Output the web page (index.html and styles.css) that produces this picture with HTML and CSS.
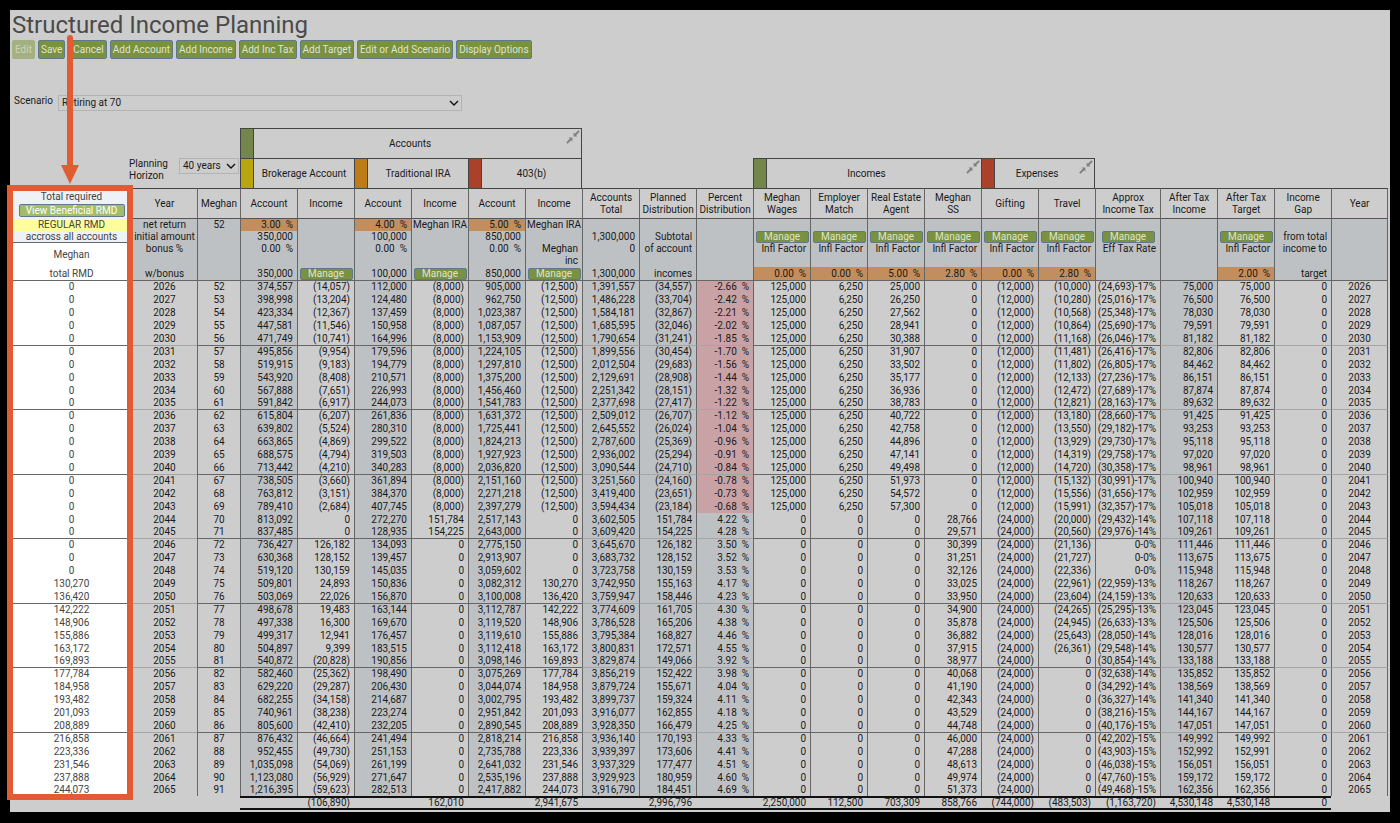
FILE: index.html
```html
<!DOCTYPE html>
<html lang="en">
<head>
  <meta charset="UTF-8">
  <meta name="viewport" content="width=device-width, initial-scale=1.0">
  <title>Structured Income Planning</title>
  <link rel="stylesheet" href="styles.css">
</head>
<body>

  <svg class="defs" width="0" height="0">
    <symbol id="collapse" viewBox="0 0 14 14">
      <path d="M7.6 6.4V2.6l1.2 1.2L12.4.2l1.4 1.4-3.6 3.6 1.2 1.2zM6.4 7.6v3.8l-1.2-1.2-3.6 3.6-1.4-1.4 3.6-3.6-1.2-1.2z"/>
    </symbol>
  </svg>

  <main class="page">
    <h1>Structured Income Planning</h1>

    <div class="toolbar">
      <button disabled>Edit</button>
      <button>Save</button>
      <button class="cancel">Cancel</button>
      <button>Add Account</button>
      <button>Add Income</button>
      <button>Add Inc Tax</button>
      <button>Add Target</button>
      <button>Edit or Add Scenario</button>
      <button>Display Options</button>
    </div>

    <div class="scenario">
      <label for="scenario">Scenario</label>
      <select id="scenario">
        <option>Retiring at 70</option>
      </select>
    </div>

    <div class="plan">
      <table>
        <colgroup>
          <col class="c-rmd">
          <col class="c-tax">
          <col class="c-age">
          <col class="shade"><col>
          <col class="shade"><col>
          <col class="shade"><col>
          <col class="shade"><col class="shade"><col class="shade">
          <col><col><col><col>
          <col><col>
          <col class="c-tax">
          <col class="shade"><col><col><col>
        </colgroup>
        <thead>
          <tr class="group-row">
            <th colspan="3"></th>
            <th colspan="6" class="group last">
              <div><span class="swatch green"></span><span class="name">Accounts</span><svg class="collapse"><use href="#collapse"/></svg></div>
            </th>
            <th colspan="14"></th>
          </tr>
          <tr class="group-row">
            <th></th>
            <th colspan="2">
              <div class="horizon">
                <label for="horizon">Planning Horizon</label>
                <select id="horizon">
                  <option>40 years</option>
                </select>
              </div>
            </th>
            <th colspan="2" class="group"><div><span class="swatch yellow"></span><span class="name">Brokerage Account</span></div></th>
            <th colspan="2" class="group"><div><span class="swatch orange"></span><span class="name">Traditional IRA</span></div></th>
            <th colspan="2" class="group last"><div><span class="swatch red"></span><span class="name">403(b)</span></div></th>
            <th colspan="3"></th>
            <th colspan="4" class="group">
              <div><span class="swatch green"></span><span class="name">Incomes</span><svg class="collapse"><use href="#collapse"/></svg></div>
            </th>
            <th colspan="2" class="group last">
              <div><span class="swatch red"></span><span class="name">Expenses</span><svg class="collapse"><use href="#collapse"/></svg></div>
            </th>
            <th colspan="5"></th>
          </tr>
          <tr class="heads">
            <th class="rmd">Total required<button class="beneficial">View Beneficial RMD</button></th>
            <th>Year</th>
            <th>Meghan</th>
            <th>Account</th>
            <th>Income</th>
            <th>Account</th>
            <th>Income</th>
            <th>Account</th>
            <th>Income</th>
            <th>Accounts Total</th>
            <th>Planned Distribution</th>
            <th>Percent Distribution</th>
            <th>Meghan Wages</th>
            <th>Employer Match</th>
            <th>Real Estate Agent</th>
            <th>Meghan<br>SS</th>
            <th>Gifting</th>
            <th>Travel</th>
            <th>Approx Income Tax</th>
            <th>After Tax Income</th>
            <th>After Tax Target</th>
            <th>Income<br>Gap</th>
            <th>Year</th>
          </tr>
        </thead>
        <tbody class="setup">
          <tr>
            <td class="rmd regular">REGULAR RMD</td>
            <td class="mid">net return</td>
            <td class="mid">52</td>
            <td class="rate">3.00&nbsp; %</td>
            <td></td>
            <td class="rate">4.00&nbsp; %</td>
            <td class="owner">Meghan IRA</td>
            <td class="rate">5.00&nbsp; %</td>
            <td class="owner">Meghan IRA</td>
            <td></td><td></td><td></td>
            <td></td><td></td><td></td><td></td>
            <td></td><td></td><td></td>
            <td></td><td></td><td></td><td></td>
          </tr>
          <tr>
            <td class="rmd across">accross all accounts</td>
            <td class="mid">initial amount</td>
            <td></td>
            <td>350,000</td>
            <td></td>
            <td>100,000</td>
            <td></td>
            <td>850,000</td>
            <td></td>
            <td>1,300,000</td>
            <td>Subtotal</td>
            <td></td>
            <td class="action"><button>Manage</button></td>
            <td class="action"><button>Manage</button></td>
            <td class="action"><button>Manage</button></td>
            <td class="action"><button>Manage</button></td>
            <td class="action"><button>Manage</button></td>
            <td class="action"><button>Manage</button></td>
            <td class="action"><button>Manage</button></td>
            <td></td>
            <td class="action"><button>Manage</button></td>
            <td>from total</td>
            <td></td>
          </tr>
          <tr class="bonus">
            <td class="rmd owner-name">Meghan</td>
            <td class="mid">bonus %</td>
            <td></td>
            <td>0.00&nbsp; %</td>
            <td></td>
            <td>0.00&nbsp; %</td>
            <td></td>
            <td>0.00&nbsp; %</td>
            <td>Meghan<br>inc</td>
            <td>0</td>
            <td>of account</td>
            <td></td>
            <td>Infl Factor</td>
            <td>Infl Factor</td>
            <td>Infl Factor</td>
            <td>Infl Factor</td>
            <td>Infl Factor</td>
            <td>Infl Factor</td>
            <td>Eff Tax Rate</td>
            <td></td>
            <td>Infl Factor</td>
            <td>income to</td>
            <td></td>
          </tr>
          <tr class="with-bonus">
            <td class="rmd">total RMD</td>
            <td class="mid">w/bonus</td>
            <td></td>
            <td>350,000</td>
            <td class="action"><button>Manage</button></td>
            <td>100,000</td>
            <td class="action"><button>Manage</button></td>
            <td>850,000</td>
            <td class="action"><button>Manage</button></td>
            <td>1,300,000</td>
            <td>incomes</td>
            <td></td>
            <td class="rate">0.00&nbsp; %</td>
            <td class="rate">0.00&nbsp; %</td>
            <td class="rate">5.00&nbsp; %</td>
            <td class="rate">2.80&nbsp; %</td>
            <td class="rate">0.00&nbsp; %</td>
            <td class="rate">2.80&nbsp; %</td>
            <td></td>
            <td></td>
            <td class="rate">2.00&nbsp; %</td>
            <td>target</td>
            <td></td>
          </tr>
        </tbody>
        <tbody class="years" id="years"></tbody>
        <tfoot>
          <tr>
            <td class="blank"></td>
            <td class="blank"></td>
            <td class="blank"></td>
            <td></td>
            <td>(106,890)</td>
            <td></td>
            <td>162,010</td>
            <td></td>
            <td>2,941,675</td>
            <td></td>
            <td>2,996,796</td>
            <td></td>
            <td>2,250,000</td>
            <td>112,500</td>
            <td>703,309</td>
            <td>858,766</td>
            <td>(744,000)</td>
            <td>(483,503)</td>
            <td>(1,163,720)</td>
            <td>4,530,148</td>
            <td>4,530,148</td>
            <td>0</td>
            <td class="blank"></td>
          </tr>
        </tfoot>
      </table>
      <div class="frame"></div>
    </div>

    <svg class="arrow" viewBox="0 0 20 150">
      <path d="M7 3a3 3 0 0 1 6 0v127h6L10 149 1 130h6z"/>
    </svg>
  </main>

  <script src="script.js"></script>
</body>
</html>
```
FILE: styles.css
```css
* {
  box-sizing: border-box;
}

body {
  margin: 0;
  padding: 10px;
  background: #000;
  color: #1a1a1a;
  font-family: Roboto, "Liberation Sans", sans-serif;
  font-size: 10px;
  line-height: 12px;
}

.defs {
  position: absolute;
}

.page {
  position: relative;
  padding: 2px;
  background: #cdcdcd;
}

h1 {
  margin: 0 0 2px;
  font-size: 24px;
  line-height: 26px;
  font-weight: 400;
  color: #4a4a4a;
}

button {
  padding: 0;
  border: 1px solid #5d7a8c;
  border-radius: 2px;
  background: #7a9140;
  color: #dfe3d3;
  font: inherit;
  cursor: pointer;
}

.toolbar {
  display: flex;
  gap: 3px;
}

.toolbar button {
  height: 19px;
  padding: 0 2px;
}

.toolbar .cancel {
  padding-left: 4px;
}

.toolbar button:disabled {
  border-color: #a3b182;
  background: #a3b182;
  color: #cdd3be;
}

select {
  appearance: none;
  height: 16px;
  padding: 0 3px;
  border: 1px solid #b3b3b3;
  border-radius: 0;
  background: #cdcdcd url('data:image/svg+xml,<svg xmlns="http://www.w3.org/2000/svg" width="10" height="6"><path d="M1 1l4 4 4-4" fill="none" stroke="%23111" stroke-width="1.4"/></svg>') no-repeat right 2px center;
  color: inherit;
  font: inherit;
}

.scenario {
  display: flex;
  gap: 5px;
  margin: 36px 0 17px;
  padding-left: 2px;
}

.scenario select {
  width: 404px;
}

.plan {
  position: relative;
}

table {
  width: 100%;
  table-layout: fixed;
  border-collapse: separate;
  border-spacing: 0;
}

col {
  width: 57px;
}

.c-rmd {
  width: 120px;
}

.c-tax {
  width: 65px;
}

.c-age {
  width: 43px;
}

.shade {
  background: #bec1c3;
}

th,
td {
  padding: 0;
  white-space: nowrap;
}

th {
  background: #cdcdcd;
  font-weight: 400;
}

/* group headings */

.group-row th {
  height: 30px;
}

.group {
  border-top: 1px solid #444;
  border-left: 1px solid #444;
}

.group.last {
  border-right: 1px solid #444;
}

.group div {
  display: flex;
  align-items: center;
  height: 29px;
}

.swatch {
  align-self: stretch;
  width: 13px;
  border-right: 1px solid #444;
}

.green { background: #74874a; }
.yellow { background: #b9a50f; }
.orange { background: #bd7c16; }
.red { background: #ab412b; }

.name {
  flex: 1;
}

.collapse {
  align-self: flex-start;
  width: 14px;
  height: 14px;
  margin: 1px 1px 0 0;
  fill: #808080;
}

.horizon {
  display: flex;
  justify-content: flex-end;
  align-items: flex-start;
  gap: 8px;
  height: 30px;
  padding-right: 1px;
  text-align: left;
  white-space: normal;
}

.horizon label {
  flex: none;
  width: 42px;
}

.horizon select {
  flex: none;
  width: 60px;
}

/* column headings */

.heads th {
  height: 31px;
  border-top: 1px solid #444;
  border-bottom: 1px solid #555;
  border-left: 1px solid #666;
  white-space: normal;
}

.heads th:last-child,
.setup td:last-child,
.years td:last-child {
  border-right: 1px solid #666;
}

.heads .rmd {
  padding-right: 2px;
  border-bottom: 0;
  background: #eef1f5;
  vertical-align: bottom;
}

.beneficial {
  display: block;
  width: 106px;
  height: 13px;
  margin: 1px auto 2px;
  background: #a3bd66;
  color: #fff;
  line-height: 11px;
}

/* values */

.setup td,
.years td {
  padding-right: 4px;
  border-left: 1px solid #666;
  text-align: right;
}

.setup td {
  height: 12px;
  background: #bec1c3;
}

.setup .bonus td {
  height: 24px;
  vertical-align: top;
}

.setup .with-bonus td {
  height: 13px;
}

.setup .mid,
.years .mid {
  padding: 0;
  text-align: center;
}

.setup .rate {
  background: #c38e5d;
}

.setup .owner,
.setup .action {
  padding: 0;
  text-align: center;
}

.action button {
  display: block;
  width: 53px;
  height: 12px;
  margin: 0 auto;
  line-height: 10px;
}

.setup .rmd,
.years .rmd {
  padding: 0 2px 0 0;
  background: #fff;
  text-align: center;
}

.rmd {
  color: #444;
}

.setup .regular {
  background: #fdfd9c;
}

.setup .across {
  border-bottom: 1px solid #666;
  background: #eef1f5;
  line-height: 11px;
}

.setup .bonus .owner-name {
  vertical-align: middle;
}

.years td {
  height: 13px;
}

.years tr:nth-child(10n) td {
  height: 12px;
}

.years tr:nth-child(5n + 1) td {
  border-top: 1px solid #666;
}

.years tr:nth-child(5n + 1) .soft {
  border-top-color: #a5a5a5;
}

.years tr:first-child .soft {
  border-top-color: #666;
}

.years .negative {
  background: #c9a2a6;
}

.years td:nth-child(2),
.setup td:nth-child(2),
.heads th:nth-child(2) {
  border-left: 0;
}

tfoot td {
  height: 14px;
  padding-right: 4px;
  border-top: 2px solid #111;
  border-bottom: 2px solid #111;
  background: #cdcdcd;
  text-align: right;
  line-height: 10px;
}

tfoot .blank {
  border: 0;
}

/* callout over the RMD column, which takes 120 of the 1376 column units */

.frame {
  position: absolute;
  top: 57px;
  bottom: 10px;
  left: -5px;
  width: calc(100% * 120 / 1376 + 6px);
  border: 6px solid #e25b33;
}

.arrow {
  position: absolute;
  top: 25px;
  left: 50px;
  width: 20px;
  height: 150px;
  fill: #e25b33;
}
```
FILE: script.js
```js
const FIRST_YEAR = 2026;
const FIRST_AGE = 52;

// rmd, brokerage, income, ira, income, 403b, income, total, planned, percent,
// wages, match, agent, ss, gifting, travel, tax, tax rate, after tax income, target
const rows = [
  [0, 374557, -14057, 112000, -8000, 905000, -12500, 1391557, -34557, -2.66, 125000, 6250, 25000, 0, -12000, -10000, -24693, 17, 75000, 75000],
  [0, 398998, -13204, 124480, -8000, 962750, -12500, 1486228, -33704, -2.42, 125000, 6250, 26250, 0, -12000, -10280, -25016, 17, 76500, 76500],
  [0, 423334, -12367, 137459, -8000, 1023387, -12500, 1584181, -32867, -2.21, 125000, 6250, 27562, 0, -12000, -10568, -25348, 17, 78030, 78030],
  [0, 447581, -11546, 150958, -8000, 1087057, -12500, 1685595, -32046, -2.02, 125000, 6250, 28941, 0, -12000, -10864, -25690, 17, 79591, 79591],
  [0, 471749, -10741, 164996, -8000, 1153909, -12500, 1790654, -31241, -1.85, 125000, 6250, 30388, 0, -12000, -11168, -26046, 17, 81182, 81182],
  [0, 495856, -9954, 179596, -8000, 1224105, -12500, 1899556, -30454, -1.70, 125000, 6250, 31907, 0, -12000, -11481, -26416, 17, 82806, 82806],
  [0, 519915, -9183, 194779, -8000, 1297810, -12500, 2012504, -29683, -1.56, 125000, 6250, 33502, 0, -12000, -11802, -26805, 17, 84462, 84462],
  [0, 543920, -8408, 210571, -8000, 1375200, -12500, 2129691, -28908, -1.44, 125000, 6250, 35177, 0, -12000, -12133, -27236, 17, 86151, 86151],
  [0, 567888, -7651, 226993, -8000, 1456460, -12500, 2251342, -28151, -1.32, 125000, 6250, 36936, 0, -12000, -12472, -27689, 17, 87874, 87874],
  [0, 591842, -6917, 244073, -8000, 1541783, -12500, 2377698, -27417, -1.22, 125000, 6250, 38783, 0, -12000, -12821, -28163, 17, 89632, 89632],
  [0, 615804, -6207, 261836, -8000, 1631372, -12500, 2509012, -26707, -1.12, 125000, 6250, 40722, 0, -12000, -13180, -28660, 17, 91425, 91425],
  [0, 639802, -5524, 280310, -8000, 1725441, -12500, 2645552, -26024, -1.04, 125000, 6250, 42758, 0, -12000, -13550, -29182, 17, 93253, 93253],
  [0, 663865, -4869, 299522, -8000, 1824213, -12500, 2787600, -25369, -0.96, 125000, 6250, 44896, 0, -12000, -13929, -29730, 17, 95118, 95118],
  [0, 688575, -4794, 319503, -8000, 1927923, -12500, 2936002, -25294, -0.91, 125000, 6250, 47141, 0, -12000, -14319, -29758, 17, 97020, 97020],
  [0, 713442, -4210, 340283, -8000, 2036820, -12500, 3090544, -24710, -0.84, 125000, 6250, 49498, 0, -12000, -14720, -30358, 17, 98961, 98961],
  [0, 738505, -3660, 361894, -8000, 2151160, -12500, 3251560, -24160, -0.78, 125000, 6250, 51973, 0, -12000, -15132, -30991, 17, 100940, 100940],
  [0, 763812, -3151, 384370, -8000, 2271218, -12500, 3419400, -23651, -0.73, 125000, 6250, 54572, 0, -12000, -15556, -31656, 17, 102959, 102959],
  [0, 789410, -2684, 407745, -8000, 2397279, -12500, 3594434, -23184, -0.68, 125000, 6250, 57300, 0, -12000, -15991, -32357, 17, 105018, 105018],
  [0, 813092, 0, 272270, 151784, 2517143, 0, 3602505, 151784, 4.22, 0, 0, 0, 28766, -24000, -20000, -29432, 14, 107118, 107118],
  [0, 837485, 0, 128935, 154225, 2643000, 0, 3609420, 154225, 4.28, 0, 0, 0, 29571, -24000, -20560, -29976, 14, 109261, 109261],
  [0, 736427, 126182, 134093, 0, 2775150, 0, 3645670, 126182, 3.50, 0, 0, 0, 30399, -24000, -21136, 0, 0, 111446, 111446],
  [0, 630368, 128152, 139457, 0, 2913907, 0, 3683732, 128152, 3.52, 0, 0, 0, 31251, -24000, -21727, 0, 0, 113675, 113675],
  [0, 519120, 130159, 145035, 0, 3059602, 0, 3723758, 130159, 3.53, 0, 0, 0, 32126, -24000, -22336, 0, 0, 115948, 115948],
  [130270, 509801, 24893, 150836, 0, 3082312, 130270, 3742950, 155163, 4.17, 0, 0, 0, 33025, -24000, -22961, -22959, 13, 118267, 118267],
  [136420, 503069, 22026, 156870, 0, 3100008, 136420, 3759947, 158446, 4.23, 0, 0, 0, 33950, -24000, -23604, -24159, 13, 120633, 120633],
  [142222, 498678, 19483, 163144, 0, 3112787, 142222, 3774609, 161705, 4.30, 0, 0, 0, 34900, -24000, -24265, -25295, 13, 123045, 123045],
  [148906, 497338, 16300, 169670, 0, 3119520, 148906, 3786528, 165206, 4.38, 0, 0, 0, 35878, -24000, -24945, -26633, 13, 125506, 125506],
  [155886, 499317, 12941, 176457, 0, 3119610, 155886, 3795384, 168827, 4.46, 0, 0, 0, 36882, -24000, -25643, -28050, 14, 128016, 128016],
  [163172, 504897, 9399, 183515, 0, 3112418, 163172, 3800831, 172571, 4.55, 0, 0, 0, 37915, -24000, -26361, -29548, 14, 130577, 130577],
  [169893, 540872, -20828, 190856, 0, 3098146, 169893, 3829874, 149066, 3.92, 0, 0, 0, 38977, -24000, 0, -30854, 14, 133188, 133188],
  [177784, 582460, -25362, 198490, 0, 3075269, 177784, 3856219, 152422, 3.98, 0, 0, 0, 40068, -24000, 0, -32638, 14, 135852, 135852],
  [184958, 629220, -29287, 206430, 0, 3044074, 184958, 3879724, 155671, 4.04, 0, 0, 0, 41190, -24000, 0, -34292, 14, 138569, 138569],
  [193482, 682255, -34158, 214687, 0, 3002795, 193482, 3899737, 159324, 4.11, 0, 0, 0, 42343, -24000, 0, -36327, 14, 141340, 141340],
  [201093, 740961, -38238, 223274, 0, 2951842, 201093, 3916077, 162855, 4.18, 0, 0, 0, 43529, -24000, 0, -38216, 15, 144167, 144167],
  [208889, 805600, -42410, 232205, 0, 2890545, 208889, 3928350, 166479, 4.25, 0, 0, 0, 44748, -24000, 0, -40176, 15, 147051, 147051],
  [216858, 876432, -46664, 241494, 0, 2818214, 216858, 3936140, 170193, 4.33, 0, 0, 0, 46000, -24000, 0, -42202, 15, 149992, 149992],
  [223336, 952455, -49730, 251153, 0, 2735788, 223336, 3939397, 173606, 4.41, 0, 0, 0, 47288, -24000, 0, -43903, 15, 152992, 152991],
  [231546, 1035098, -54069, 261199, 0, 2641032, 231546, 3937329, 177477, 4.51, 0, 0, 0, 48613, -24000, 0, -46038, 15, 156051, 156051],
  [237888, 1123080, -56929, 271647, 0, 2535196, 237888, 3929923, 180959, 4.60, 0, 0, 0, 49974, -24000, 0, -47760, 15, 159172, 159172],
  [244073, 1216395, -59623, 282513, 0, 2417882, 244073, 3916790, 184451, 4.69, 0, 0, 0, 51373, -24000, 0, -49468, 15, 162356, 162356]
];

function money(value) {
  const text = Math.abs(value).toLocaleString('en-US');
  return value < 0 ? `(${text})` : text;
}

function cell(text, className) {
  return className ? `<td class="${className}">${text}</td>` : `<td>${text}</td>`;
}

document.getElementById('years').innerHTML = rows.map((row, i) => {
  const year = FIRST_YEAR + i;
  const percent = row[9];

  return '<tr>' +
    cell(money(row[0]), 'rmd') +
    cell(year, 'mid soft') +
    cell(FIRST_AGE + i, 'mid') +
    row.slice(1, 7).map(value => cell(money(value))).join('') +
    cell(money(row[7]), 'soft') +
    cell(money(row[8]), 'soft') +
    cell(percent.toFixed(2) + '&nbsp; %', percent < 0 ? 'soft negative' : 'soft') +
    row.slice(10, 16).map(value => cell(money(value))).join('') +
    cell(`${money(row[16])}-${row[17]}%`) +
    cell(money(row[18]), 'soft') +
    cell(money(row[19])) +
    cell(0, 'soft') +
    cell(year, 'mid soft') +
    '</tr>';
}).join('');
```
